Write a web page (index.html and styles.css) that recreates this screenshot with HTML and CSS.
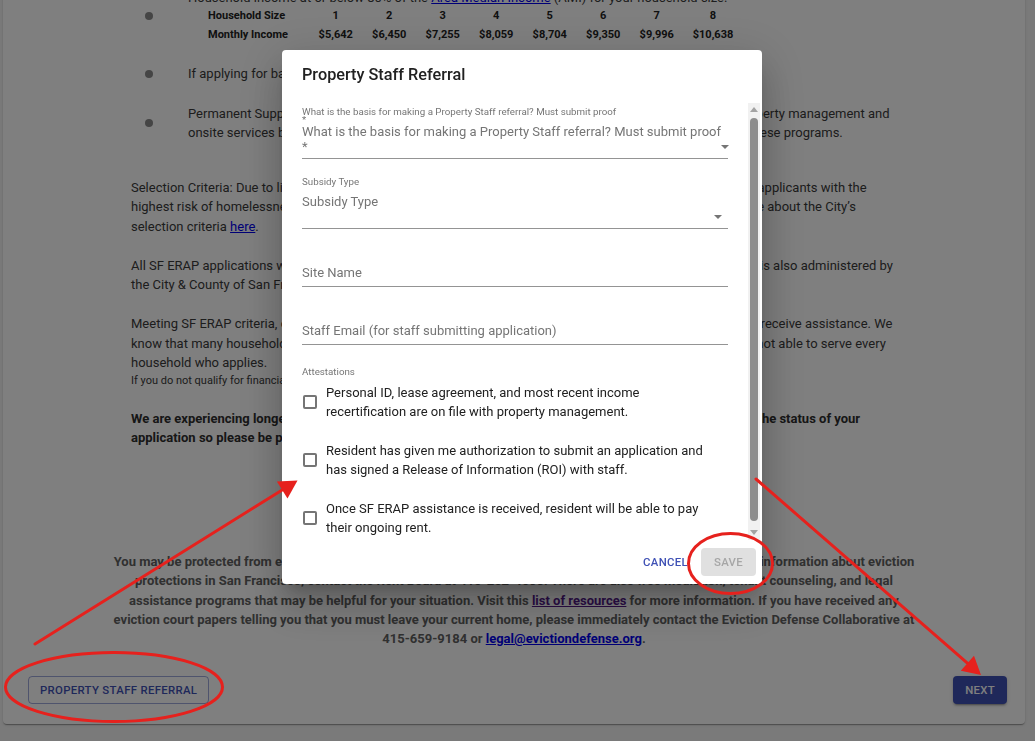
FILE: index.html
```html
<!DOCTYPE html>
<html lang="en">
<head>
<meta charset="utf-8">
<title>SF ERAP – Eligibility</title>
<link rel="stylesheet" href="styles.css">
</head>
<body>
<main class="card">
  <div class="content">
    <ul class="bullets">
      <li class="bullet-item">
        <span class="bullet-icon"><span class="dot"></span></span>
        <div class="bullet-text">
          <div>Household income at or below 80% of the <a href="#">Area Median Income</a> (AMI) for your household size.</div>
          <div class="income-table">
            <span class="th">Household Size</span><span>1</span><span>2</span><span>3</span><span>4</span><span>5</span><span>6</span><span>7</span><span>8</span>
            <span class="th">Monthly Income</span><span>$5,642</span><span>$6,450</span><span>$7,255</span><span>$8,059</span><span>$8,704</span><span>$9,350</span><span>$9,996</span><span>$10,638</span>
          </div>
        </div>
      </li>
      <li class="bullet-item">
        <span class="bullet-icon"><span class="dot"></span></span>
        <div class="bullet-text">If applying for back rent, you must have unpaid rent owed from April 2020 or later.</div>
      </li>
      <li class="bullet-item">
        <span class="bullet-icon"><span class="dot"></span></span>
        <div class="bullet-text">Permanent Supportive Housing (PSH) residents should apply with a referral and help from their property management and<br>onsite services because SF ERAP is coordinating with Homelessness and Supportive Housing on these programs.</div>
      </li>
    </ul>

    <p class="para first">Selection Criteria: Due to limited funding, SF ERAP is not able to assist every household and will prioritize the applicants with the<br>highest risk of homelessness, the lowest household incomes, and the most urgent housing needs. Learn more about the City’s<br>selection criteria <a href="#">here</a>.</p>

    <p class="para">All SF ERAP applications will also be considered for the State of California rental assistance programs, which is also administered by<br>the City &amp; County of San Francisco.</p>

    <p class="para tight">Meeting SF ERAP criteria, or submitting a completed application, does not guarantee that your household will receive assistance. We<br>know that many households need help with rent right now, and we are sorry that, with limited funding, we are not able to serve every<br>household who applies.</p>
    <p class="small">If you do not qualify for financial assistance, you may still be eligible for other programs.</p>

    <p class="para strong">We are experiencing longer than usual wait times. It may take a few weeks before you receive an update on the status of your<br>application so please be patient.</p>
  </div>

  <p class="notice">You may be protected from eviction under state and local laws even if you cannot pay your back rent. For more information about eviction<br>protections in San Francisco, contact the Rent Board at 415-252-4600. There are also free mediation, tenant counseling, and legal<br>assistance programs that may be helpful for your situation. Visit this <a class="visited" href="#">list of resources</a> for more information. If you have received any<br>eviction court papers telling you that you must leave your current home, please immediately contact the Eviction Defense Collaborative at<br>415-659-9184 or <a href="#">legal@evictiondefense.org</a>.</p>

  <div class="actions">
    <button class="btn btn-outline" type="button">Property Staff Referral</button>
    <button class="btn btn-primary" type="button">Next</button>
  </div>
</main>

<div class="modal">
  <section class="dialog" role="dialog" aria-labelledby="dlg-title">
    <h2 class="dialog-title" id="dlg-title">Property Staff Referral</h2>
    <div class="dialog-body">
      <div class="dialog-content">
        <div class="field">
          <div class="shrink-label">What is the basis for making a Property Staff referral? Must submit proof<span class="star">*</span></div>
          <div class="select-value">
            <div class="select-text">What is the basis for making a Property Staff referral? Must submit proof<span class="star">*</span></div>
            <span class="select-arrow"></span>
          </div>
        </div>
        <div class="field">
          <div class="shrink-label">Subsidy Type</div>
          <div class="select-value">
            <div class="select-text">Subsidy Type</div>
            <span class="select-arrow"></span>
          </div>
        </div>
        <div class="field text-field">
          <div class="tf-label">Site Name</div>
        </div>
        <div class="field text-field">
          <div class="tf-label">Staff Email (for staff submitting application)</div>
        </div>

        <div class="group-label">Attestations</div>
        <label class="check-row">
          <span class="check-box"></span>
          <span class="check-text">Personal ID, lease agreement, and most recent income<br>recertification are on file with property management.</span>
        </label>
        <label class="check-row">
          <span class="check-box"></span>
          <span class="check-text">Resident has given me authorization to submit an application and<br>has signed a Release of Information (ROI) with staff.</span>
        </label>
        <label class="check-row">
          <span class="check-box"></span>
          <span class="check-text">Once SF ERAP assistance is received, resident will be able to pay<br>their ongoing rent.</span>
        </label>
      </div>
      <div class="scrollbar">
        <span class="sb-up"></span>
        <span class="sb-thumb"></span>
        <span class="sb-down"></span>
      </div>
    </div>
    <div class="dialog-actions">
      <button class="btn btn-text" type="button">Cancel</button>
      <button class="btn btn-disabled" type="button" disabled>Save</button>
    </div>
  </section>
</div>

<svg class="annotations" width="1035" height="741" viewBox="0 0 1035 741" aria-hidden="true">
  <g fill="none" stroke="#e6211d" stroke-width="3" stroke-linecap="round">
    <ellipse cx="114" cy="687" rx="108.5" ry="34.5"/>
    <ellipse cx="730.5" cy="563.5" rx="42" ry="30"/>
    <line x1="35" y1="644" x2="282.2" y2="490"/>
    <line x1="756" y1="479" x2="967.4" y2="663.2"/>
  </g>
  <g fill="#e6211d">
    <polygon points="297.5,480.5 287.5,498.5 276.9,481.5"/>
    <polygon points="981,675 960.8,670.7 974,655.7"/>
  </g>
</svg>
</body>
</html>
```
FILE: styles.css
```css
* {
  box-sizing: border-box;
}

html {
  font-size: 13px;
}

body {
  margin: 0;
  padding: 0 10px 0 3px;
  height: 741px;
  overflow: hidden;
  background: #f4f4f4;
  font-family: Roboto, "Liberation Sans", Arial, sans-serif;
  color: #3a3a3a;
}

a {
  color: #0000ee;
  text-decoration: underline;
}

a.visited {
  color: #551a8b;
}

/* ---------- page card ---------- */
.card {
  margin-top: -22.5px;
  background: #fff;
  border-radius: 4px;
  box-shadow: 0 2px 1px -1px rgba(0, 0, 0, 0.2), 0 1px 1px 0 rgba(0, 0, 0, 0.14), 0 1px 3px 0 rgba(0, 0, 0, 0.12);
  padding-bottom: 20px;
}

.content {
  width: 766px;
  margin: 0 auto;
  font-size: 13px;
  line-height: 19.5px;
}

.bullets {
  list-style: none;
  margin: 0;
  padding: 0;
}

.bullet-item {
  display: flex;
  align-items: center;
  padding: 10px 0;
}

.bullet-icon {
  width: 57px;
  flex: none;
  display: flex;
  padding-left: 14px;
}

.dot {
  width: 8px;
  height: 8px;
  border-radius: 50%;
  background: #8a8a8a;
}

.bullet-text {
  white-space: nowrap;
}

.income-table {
  display: grid;
  grid-template-columns: 110px repeat(7, 53.5px) 59px;
  margin-left: 11px;
  font-size: 11px;
  line-height: 18.5px;
  font-weight: 700;
  color: #222;
  text-align: center;
}

.income-table .th {
  text-align: left;
  padding-left: 9px;
}

.para {
  margin: 0 0 19.5px;
  white-space: nowrap;
}

.para.first {
  margin-top: 25px;
}

.para.tight {
  margin-bottom: 0;
}

.small {
  margin: 0 0 19.5px;
  font-size: 11px;
  line-height: 16.5px;
  white-space: nowrap;
}

.para.strong {
  font-weight: 700;
  color: #2e2e2e;
}

.notice {
  width: 900px;
  margin: 104.5px auto 0;
  text-align: center;
  font-size: 13px;
  line-height: 19.25px;
  font-weight: 700;
  color: #616161;
  white-space: nowrap;
}

.actions {
  display: flex;
  justify-content: space-between;
  align-items: center;
  margin-top: 27.25px;
  padding: 0 18px 0 25px;
}

/* ---------- buttons ---------- */
.btn {
  height: 28px;
  padding: 0 13px;
  border: 0;
  border-radius: 4px;
  font-family: Roboto, "Liberation Sans", Arial, sans-serif;
  font-size: 11.375px;
  font-weight: 500;
  line-height: 28px;
  letter-spacing: 0.02857em;
  text-transform: uppercase;
  background: transparent;
}

.btn-outline {
  border: 1px solid rgba(63, 81, 181, 0.5);
  color: #3f51b5;
  padding: 0 11px;
  line-height: 26px;
}

.btn-primary {
  background: #3f51b5;
  color: #fff;
  padding: 0 12px;
  box-shadow: 0 3px 1px -2px rgba(0, 0, 0, 0.2), 0 2px 2px 0 rgba(0, 0, 0, 0.14), 0 1px 5px 0 rgba(0, 0, 0, 0.12);
}

.btn-text {
  color: #3f51b5;
  padding: 0 6.5px;
  margin-right: 6.5px;
}

.btn-disabled {
  background: #e0e0e0;
  color: #a6a6a6;
}

/* ---------- modal ---------- */
.modal {
  position: fixed;
  inset: 0;
  background: rgba(0, 0, 0, 0.5);
  display: flex;
  justify-content: center;
  align-items: flex-start;
  padding: 50px 0 0 9px;
}

.dialog {
  width: 480px;
  height: 534px;
  background: #fff;
  border-radius: 4px;
  display: flex;
  flex-direction: column;
  box-shadow: 0 11px 15px -7px rgba(0, 0, 0, 0.2), 0 24px 38px 3px rgba(0, 0, 0, 0.14), 0 9px 46px 8px rgba(0, 0, 0, 0.12);
}

.dialog-title {
  margin: 0;
  padding: 12px 20px 15px;
  font-size: 16.25px;
  font-weight: 500;
  line-height: 26px;
  color: #212121;
}

.dialog-body {
  display: flex;
  height: 437px;
}

.dialog-content {
  flex: 1;
  padding: 5px 20px 0;
  overflow: hidden;
}

.field {
  border-bottom: 1px solid #949494;
}

.field + .field {
  margin-top: 19px;
}

.shrink-label {
  height: 16px;
  font-size: 9.75px;
  line-height: 8px;
  color: #757575;
  white-space: nowrap;
}

.star {
  display: block;
}

.select-value {
  display: flex;
  align-items: flex-end;
  padding-bottom: 4px;
}

.select-text {
  flex: 1;
  min-height: 30px;
  font-size: 13px;
  line-height: 15px;
  color: #757575;
  white-space: nowrap;
}

.select-arrow {
  width: 0;
  height: 0;
  border-left: 4px solid transparent;
  border-right: 4px solid transparent;
  border-top: 4px solid #757575;
  margin: 0 6px 5px 0;
}

.text-field {
  padding-top: 16px;
}

.tf-label {
  padding: 1px 0 6px;
  font-size: 13px;
  line-height: 15px;
  color: #757575;
}

.group-label {
  margin-top: 21px;
  font-size: 9.75px;
  line-height: 12px;
  color: #757575;
}

.check-row {
  display: flex;
  align-items: center;
  margin-top: 20px;
}

.group-label + .check-row {
  margin-top: 4.5px;
}

.check-box {
  flex: none;
  width: 14px;
  height: 14px;
  margin: 0 9px 0 1px;
  border: 2px solid #757575;
  border-radius: 2px;
}

.check-text {
  font-size: 13px;
  line-height: 19px;
  color: #212121;
  white-space: nowrap;
}

.scrollbar {
  width: 12px;
  margin-right: 2px;
  background: #f1f1f1;
  display: flex;
  flex-direction: column;
  align-items: center;
}

.sb-up {
  margin-top: 4px;
  border-left: 4px solid transparent;
  border-right: 4px solid transparent;
  border-bottom: 5px solid #a3a3a3;
}

.sb-thumb {
  margin-top: 6px;
  width: 8px;
  height: 403px;
  border-radius: 4px;
  background: #8d8d8d;
}

.sb-down {
  margin-top: 9px;
  border-left: 4px solid transparent;
  border-right: 4px solid transparent;
  border-top: 5px solid #a3a3a3;
}

.dialog-actions {
  flex: 1;
  display: flex;
  justify-content: flex-end;
  align-items: center;
  padding-right: 6px;
}

/* ---------- screenshot annotations ---------- */
.annotations {
  position: fixed;
  top: 0;
  left: 0;
  pointer-events: none;
}
```
